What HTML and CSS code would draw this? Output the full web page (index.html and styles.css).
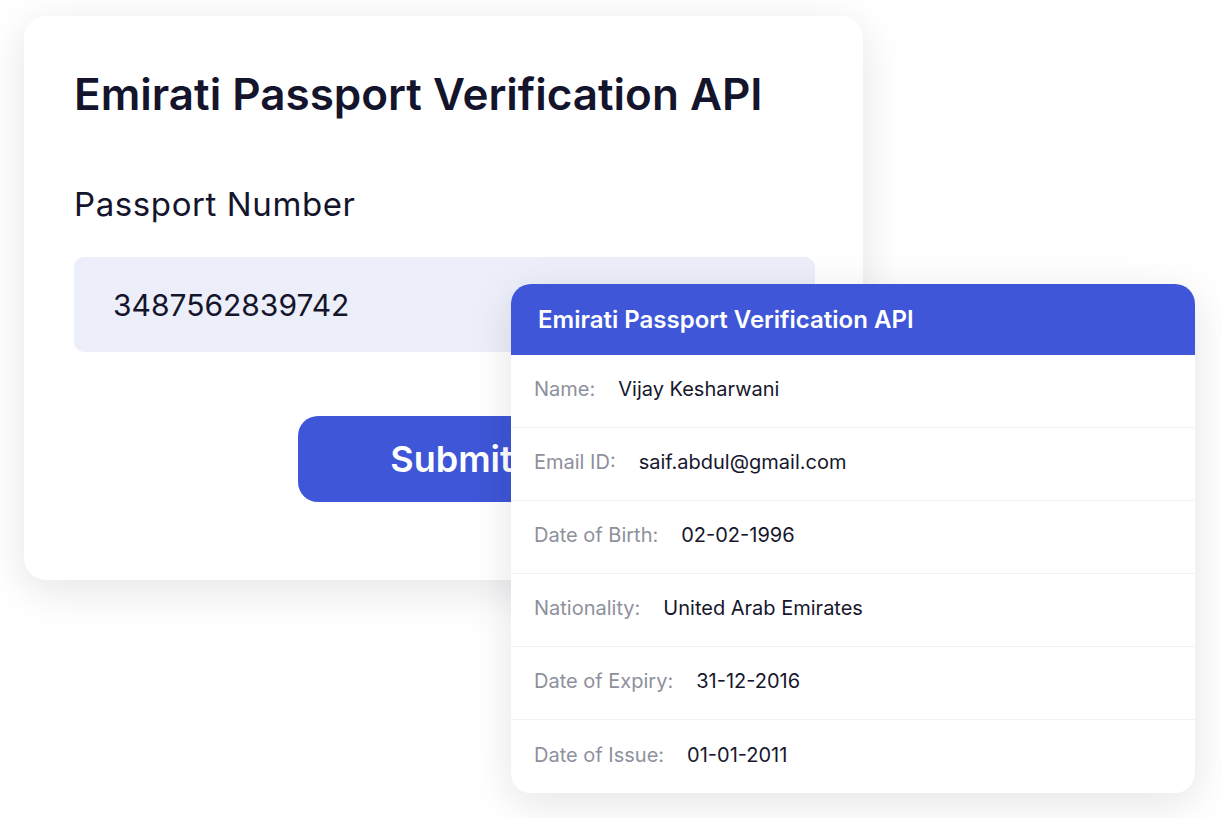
FILE: index.html
```html
<!DOCTYPE html>
<html>
<head>
    <title>Emirati Passport Verification API</title>
    <link rel="stylesheet" href="styles.css">
</head>
<body>
    <main class="stage">
        <section class="form-card">
            <h1 class="form-title">Emirati Passport Verification API</h1>
            <label class="field-label" for="passport">Passport Number</label>
            <div class="field-input" id="passport">3487562839742</div>
            <div class="form-actions">
                <button type="button" class="submit-btn">Submit</button>
            </div>
        </section>

        <section class="result-card">
            <h2 class="result-head">Emirati Passport Verification API</h2>
            <ul class="result-list">
                <li class="result-row"><span class="result-label">Name:</span><span class="result-value">Vijay Kesharwani</span></li>
                <li class="result-row"><span class="result-label">Email ID:</span><span class="result-value">saif.abdul@gmail.com</span></li>
                <li class="result-row"><span class="result-label">Date of Birth:</span><span class="result-value">02-02-1996</span></li>
                <li class="result-row"><span class="result-label">Nationality:</span><span class="result-value">United Arab Emirates</span></li>
                <li class="result-row"><span class="result-label">Date of Expiry:</span><span class="result-value">31-12-2016</span></li>
                <li class="result-row"><span class="result-label">Date of Issue:</span><span class="result-value">01-01-2011</span></li>
            </ul>
        </section>
    </main>
</body>
</html>
```

FILE: styles.css
```css
body {
    margin: 0;
    background-color: #FFFFFF;
    font-family: Inter, "Noto Sans", sans-serif;
    color: #14152c;
}

.stage {
    position: relative;
    width: 1222px;
    height: 818px;
    overflow: hidden;
}

.form-card {
    margin: 16px 0 0 24px;
    width: 839px;
    height: 564px;
    box-sizing: border-box;
    padding: 52px 48px 0 50px;
    background-color: #FFFFFF;
    border-radius: 22px;
    box-shadow: 0 10px 44px rgba(20, 20, 40, 0.11);
}

.form-title {
    margin: 0;
    font-size: 44px;
    line-height: 52px;
    font-weight: 600;
}

.field-label {
    display: block;
    margin-top: 64px;
    font-size: 33px;
    line-height: 40px;
    font-weight: 400;
    letter-spacing: 0.6px;
}

.field-input {
    margin-top: 33px;
    height: 95px;
    box-sizing: border-box;
    padding-left: 39px;
    display: flex;
    align-items: center;
    background-color: #eceef9;
    border-radius: 10px;
    font-size: 30px;
}

.form-actions {
    display: flex;
    margin-top: 64px;
    padding-left: 224px;
}

.submit-btn {
    width: 307px;
    height: 86px;
    border: none;
    border-radius: 20px;
    background-color: #3e56d7;
    color: #FFFFFF;
    font-family: Inter, "Noto Sans", sans-serif;
    font-size: 36px;
    font-weight: 600;
    cursor: pointer;
}

/* result card sits on top of the form card */
.result-card {
    position: absolute;
    left: 511px;
    top: 284px;
    width: 684px;
    background-color: #FFFFFF;
    border-radius: 20px;
    overflow: hidden;
    box-shadow: 0 10px 44px rgba(20, 20, 40, 0.11);
}

.result-head {
    margin: 0;
    height: 71px;
    padding-left: 27px;
    display: flex;
    align-items: center;
    background-color: #3e56d7;
    color: #FFFFFF;
    font-size: 24px;
    font-weight: 600;
}

.result-list {
    list-style: none;
    margin: 0;
    padding: 0;
}

.result-row {
    height: 73px;
    box-sizing: border-box;
    padding-left: 23px;
    padding-bottom: 4px;
    display: flex;
    align-items: center;
    gap: 23px;
    font-size: 20px;
    border-bottom: 1px solid #f1f2f4;
}

.result-row:last-child {
    border-bottom: none;
}

.result-label {
    color: #8d919d;
}

.result-value {
    color: #16172d;
}
```
